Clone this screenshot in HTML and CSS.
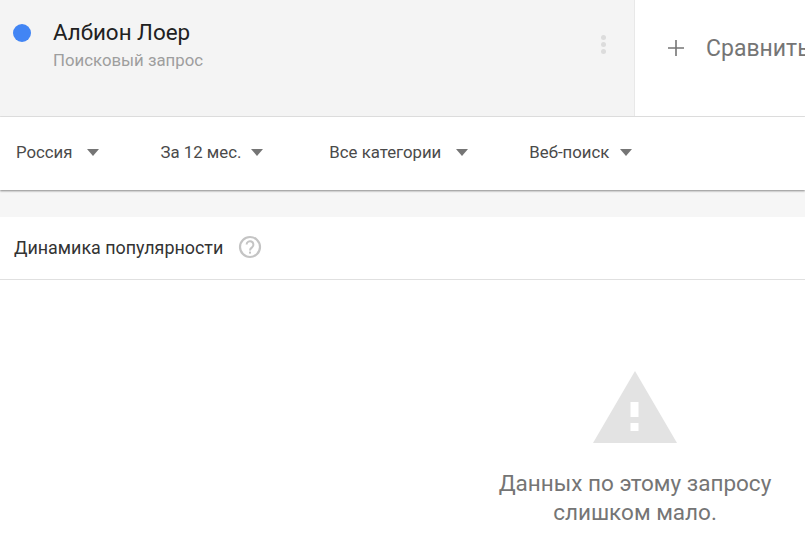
FILE: index.html
```html
<!DOCTYPE html>
<html lang="ru">
<head>
    <meta charset="UTF-8">
    <meta name="viewport" content="width=device-width, initial-scale=1.0">
    <title>Динамика популярности</title>
    <link rel="stylesheet" href="styles.css">
</head>
<body>
    <!-- Search term header -->
    <div class="terms">
        <div class="term">
            <span class="term-dot"></span>
            <div class="term-text">
                <div class="term-name">Албион Лоер</div>
                <div class="term-type">Поисковый запрос</div>
            </div>
            <div class="term-menu">
                <span></span>
                <span></span>
                <span></span>
            </div>
        </div>
        <div class="compare">
            <svg class="compare-plus" width="16" height="16" viewBox="0 0 16 16">
                <path d="M8 0v16M0 8h16" stroke="#757575" stroke-width="1.6" fill="none"/>
            </svg>
            <span class="compare-label">Сравнить</span>
        </div>
    </div>

    <!-- Filters -->
    <div class="filters">
        <div class="filter filter-region">Россия<span class="arrow"></span></div>
        <div class="filter filter-time">За 12 мес.<span class="arrow"></span></div>
        <div class="filter filter-category">Все категории<span class="arrow"></span></div>
        <div class="filter filter-type">Веб-поиск<span class="arrow"></span></div>
    </div>

    <div class="band"></div>

    <!-- Interest over time -->
    <div class="widget-head">
        <h2>Динамика популярности</h2>
        <svg class="help" width="24" height="24" viewBox="0 0 24 24">
            <circle cx="12" cy="12" r="10" stroke="#c4c4c4" stroke-width="2.2" fill="none"/>
            <path d="M8.6 9.6a3.4 3.4 0 1 1 5.6 2.6c-1.3 1-2.2 1.6-2.2 3.2" stroke="#c4c4c4" stroke-width="2" fill="none"/>
            <rect x="11" y="16.6" width="2" height="2" fill="#c4c4c4"/>
        </svg>
    </div>

    <div class="empty">
        <svg class="empty-icon" width="84" height="72" viewBox="0 0 84 72">
            <path d="M42 0L84 72H0Z" fill="#e3e3e3"/>
            <rect x="37.500" y="31" width="8" height="15" fill="#fff"/>
            <rect x="37.500" y="52" width="8" height="8" fill="#fff"/>
        </svg>
        <p>Данных по этому запросу<br>слишком мало.</p>
    </div>
</body>
</html>
```

FILE: styles.css
```css
* {
    margin: 0;
    padding: 0;
    box-sizing: border-box;
    font-family: Roboto, Arial, sans-serif;
}

html, body {
    height: 100%;
    overflow: hidden;
}

body {
    background: white;
    color: #333;
}

/* Search term header */
.terms {
    display: flex;
    height: 117px;
    border-bottom: 1px solid #e4e4e4;
}

.term {
    display: flex;
    align-items: flex-start;
    width: 635px;
    background: #f4f4f4;
    border-right: 1px solid #e8e8e8;
    padding: 19px 0 0 13px;
    flex-shrink: 0;
}

.term-dot {
    width: 18px;
    height: 18px;
    margin-top: 5px;
    border-radius: 50%;
    background: #4285f4;
    flex-shrink: 0;
}

.term-text {
    margin-left: 22px;
    flex: 1;
}

.term-name {
    font-size: 22.4px;
    line-height: 26px;
    color: #212121;
}

.term-type {
    margin-top: 6px;
    font-size: 16.8px;
    line-height: 18px;
    color: #9e9e9e;
}

.term-menu {
    display: flex;
    flex-direction: column;
    gap: 2px;
    margin: 16px 28px 0 0;
}

.term-menu span {
    width: 5px;
    height: 5px;
    border-radius: 50%;
    background: #dcdcdc;
}

.compare {
    display: flex;
    align-items: center;
    height: 96px;
    padding-left: 33px;
    white-space: nowrap;
}

.compare-plus {
    flex-shrink: 0;
}

.compare-label {
    margin-left: 22px;
    font-size: 23px;
    color: #757575;
}

/* Filters */
.filters {
    display: flex;
    align-items: center;
    height: 73px;
    padding: 0 0 3px 16px;
    background: white;
    box-shadow: 0 1px 2px rgba(0,0,0,0.45);
    position: relative;
}

.filter {
    display: flex;
    align-items: center;
    font-size: 16.8px;
    color: #4a4a4a;
}

.filter-region { margin-right: 62px; }
.filter-time { margin-right: 66px; }
.filter-category { margin-right: 61px; }

.arrow {
    width: 0;
    height: 0;
    border-left: 6px solid transparent;
    border-right: 6px solid transparent;
    border-top: 7px solid #757575;
}

.filter-region .arrow { margin-left: 14px; }
.filter-time .arrow { margin-left: 10px; }
.filter-category .arrow { margin-left: 15px; }
.filter-type .arrow { margin-left: 11px; }

.band {
    height: 27px;
    background: #f6f6f6;
}

/* Widget */
.widget-head {
    display: flex;
    align-items: center;
    height: 63px;
    padding: 0 0 2px 14px;
    border-bottom: 1px solid #e0e0e0;
}

.widget-head h2 {
    font-size: 17.9px;
    font-weight: 400;
    color: #333;
}

.help {
    margin-left: 15px;
}

.empty {
    display: flex;
    flex-direction: column;
    align-items: center;
    width: 340px;
    margin-left: 465px;
    padding-top: 91px;
}

.empty p {
    margin-top: 26px;
    font-size: 22.5px;
    line-height: 29px;
    text-align: center;
    color: #757575;
}
```
